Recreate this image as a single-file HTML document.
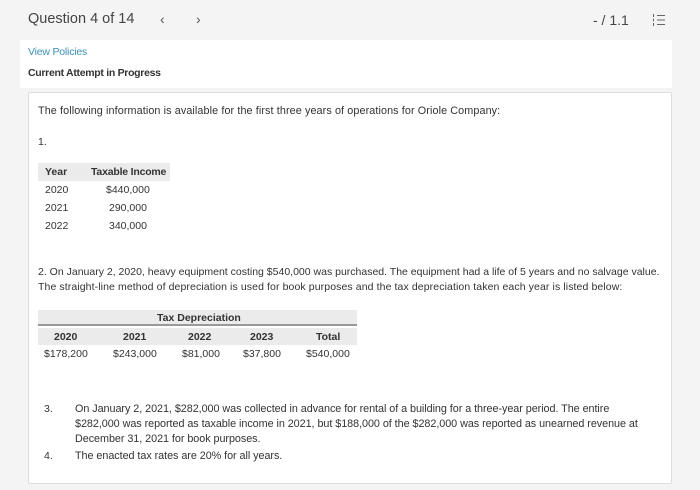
<!DOCTYPE html>
<html><head><meta charset="utf-8"><style>
*{margin:0;padding:0;box-sizing:border-box}
body{width:700px;height:490px;background:#f4f4f4;font-family:"Liberation Sans",sans-serif;color:#333;position:relative;overflow:hidden}
.abs{position:absolute;white-space:nowrap}
.t{font-size:10.5px;letter-spacing:0}
.w{font-size:10.8px;letter-spacing:0.1px}
.white{position:absolute;left:20px;top:40px;width:652px;height:48px;background:#fff}
.card{position:absolute;left:28px;top:92px;width:644px;height:392px;background:#fff;border:1px solid #ddd;border-radius:2px}
.g{background:#ebebeb}
</style></head><body>
<div class="abs" style="left:28px;top:11px;font-size:14.5px;color:#444">Question 4 of 14</div>
<div class="abs" style="left:160px;top:11px;font-size:14px;color:#555">&#8249;</div>
<div class="abs" style="left:196px;top:11px;font-size:14px;color:#555">&#8250;</div>
<div class="abs" style="left:593px;top:12px;font-size:14px;color:#444">- / 1.1</div>
<svg class="abs" style="left:652px;top:14px" width="14" height="12" viewBox="0 0 14 12"><g stroke="#666" stroke-width="1"><line x1="5" y1="1.5" x2="13" y2="1.5"/><line x1="5" y1="6" x2="13" y2="6"/><line x1="5" y1="10.5" x2="13" y2="10.5"/><line x1="1.5" y1="0" x2="1.5" y2="3"/><line x1="1.5" y1="4.5" x2="1.5" y2="7.5"/><line x1="1.5" y1="9" x2="1.5" y2="12"/></g></svg>
<div class="white"></div>
<div class="abs t" style="left:28px;top:46px;color:#3a8fb7;letter-spacing:-0.2px">View Policies</div>
<div class="abs t" style="left:28px;top:67px;font-weight:bold;color:#333;letter-spacing:-0.3px">Current Attempt in Progress</div>
<div class="card"></div>
<div class="abs w" style="left:38px;top:105px">The following information is available for the first three years of operations for Oriole Company:</div>
<div class="abs t" style="left:38px;top:136px">1.</div>
<div class="abs g" style="left:38px;top:163px;width:132px;height:18px"></div>
<div class="abs t" style="left:45px;top:166px;font-weight:bold">Year</div>
<div class="abs t" style="left:91px;top:166px;font-weight:bold;letter-spacing:-0.2px">Taxable Income</div>
<div class="abs t" style="left:45px;top:184px">2020</div><div class="abs t" style="left:106px;top:184px">$440,000</div>
<div class="abs t" style="left:45px;top:202px">2021</div><div class="abs t" style="left:109px;top:202px">290,000</div>
<div class="abs t" style="left:45px;top:220px">2022</div><div class="abs t" style="left:109px;top:220px">340,000</div>
<div class="abs t" style="left:38px;top:266px">2. On January 2, 2020, heavy equipment costing $540,000 was purchased. The equipment had a life of 5 years and no salvage value.</div>
<div class="abs t" style="left:38px;top:281px;letter-spacing:0.1px">The straight-line method of depreciation is used for book purposes and the tax depreciation taken each year is listed below:</div>
<div class="abs g" style="left:38px;top:310px;width:319px;height:16px;border-bottom:2px solid #999"></div>
<div class="abs g" style="left:38px;top:328px;width:319px;height:17px"></div>
<div class="abs t" style="left:157px;top:312px;font-weight:bold">Tax Depreciation</div>
<div class="abs t" style="left:54px;top:331px;font-weight:bold">2020</div>
<div class="abs t" style="left:123px;top:331px;font-weight:bold">2021</div>
<div class="abs t" style="left:188px;top:331px;font-weight:bold">2022</div>
<div class="abs t" style="left:250px;top:331px;font-weight:bold">2023</div>
<div class="abs t" style="left:316px;top:331px;font-weight:bold">Total</div>
<div class="abs t" style="left:44px;top:348px">$178,200</div>
<div class="abs t" style="left:113px;top:348px">$243,000</div>
<div class="abs t" style="left:182px;top:348px">$81,000</div>
<div class="abs t" style="left:243px;top:348px">$37,800</div>
<div class="abs t" style="left:306px;top:348px">$540,000</div>
<div class="abs t" style="left:44px;top:403px">3.</div>
<div class="abs w" style="left:75px;top:403px;letter-spacing:-0.05px">On January 2, 2021, $282,000 was collected in advance for rental of a building for a three-year period. The entire</div>
<div class="abs w" style="left:75px;top:418px;letter-spacing:-0.05px">$282,000 was reported as taxable income in 2021, but $188,000 of the $282,000 was reported as unearned revenue at</div>
<div class="abs w" style="left:75px;top:433px;letter-spacing:-0.05px">December 31, 2021 for book purposes.</div>
<div class="abs t" style="left:44px;top:450px">4.</div>
<div class="abs w" style="left:75px;top:450px;letter-spacing:-0.05px">The enacted tax rates are 20% for all years.</div>
</body></html>
